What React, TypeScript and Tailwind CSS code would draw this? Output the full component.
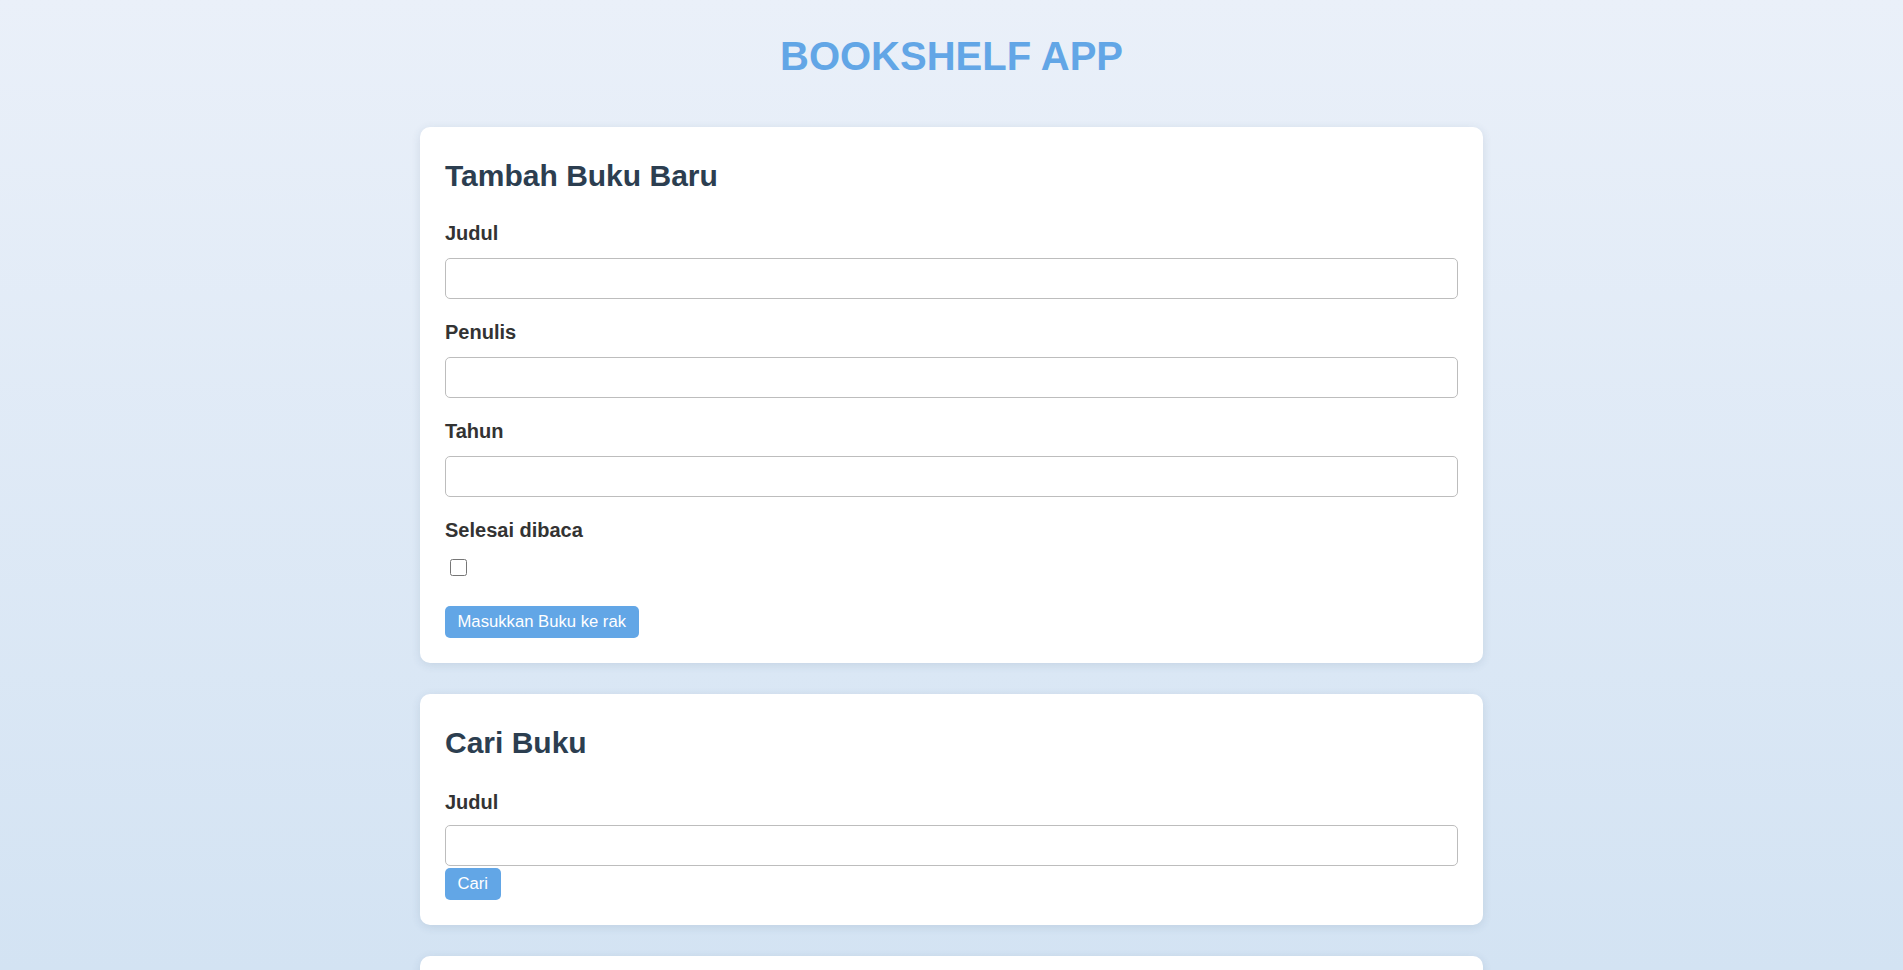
import * as React from 'react'

type Field = { id: string; label: string; type?: string }

const bookFields: Field[] = [
  { id: 'bookFormTitle', label: 'Judul' },
  { id: 'bookFormAuthor', label: 'Penulis' },
  { id: 'bookFormYear', label: 'Tahun', type: 'number' },
]

function Card({ children }: { children: React.ReactNode }) {
  return (
    <section className="bg-white rounded-[10px] p-[25px] shadow-[0_2px_10px_rgba(40,70,110,0.12)]">
      {children}
    </section>
  )
}

function Heading({ children, className = '' }: { children: React.ReactNode; className?: string }) {
  return (
    <h2 className={`mt-[6px] text-[30px] leading-[36px] font-bold text-[#2c3e50] ${className}`}>
      {children}
    </h2>
  )
}

function Label({ htmlFor, children }: { htmlFor: string; children: React.ReactNode }) {
  return (
    <label htmlFor={htmlFor} className="block text-[20px] leading-[23px] font-bold text-[#333333]">
      {children}
    </label>
  )
}

function TextInput({ id, type = 'text' }: { id: string; type?: string }) {
  return (
    <input
      id={id}
      type={type}
      className="block w-full h-[41px] px-[10px] border border-[#bdbdbd] rounded-[5px] bg-white text-[18px] outline-none"
    />
  )
}

function Button({ children }: { children: React.ReactNode }) {
  return (
    <button
      type="submit"
      className="h-[32px] px-[12.5px] rounded-[5px] bg-[#62a6e6] text-white text-[16.67px] leading-none"
    >
      {children}
    </button>
  )
}

export default function App() {
  const [done, setDone] = React.useState(false)

  return (
    <div className="min-h-screen bg-fixed bg-gradient-to-b from-[#eaf0f9] to-[#d3e3f3] font-['Liberation_Sans',Arial,sans-serif] pb-[40px]">
      <header className="pt-[33px]">
        <h1 className="text-center text-[40px] leading-[46px] font-bold text-[#62a6e6]">BOOKSHELF APP</h1>
      </header>

      <main className="w-[1063px] mx-auto mt-[48px] flex flex-col gap-[31px]">
        {/* Form tambah buku */}
        <Card>
          <Heading className="mb-[28px]">Tambah Buku Baru</Heading>
          <form onSubmit={(e) => e.preventDefault()}>
            <div className="flex flex-col gap-[22px]">
              {bookFields.map((f) => (
                <div key={f.id}>
                  <Label htmlFor={f.id}>{f.label}</Label>
                  <div className="mt-[13px]">
                    <TextInput id={f.id} type={f.type} />
                  </div>
                </div>
              ))}
              <div>
                <Label htmlFor="bookFormIsComplete">Selesai dibaca</Label>
                <div className="mt-[17px] pl-[5px] flex">
                  <input
                    id="bookFormIsComplete"
                    type="checkbox"
                    checked={done}
                    onChange={(e) => setDone(e.target.checked)}
                    className="w-[17px] h-[17px] m-0"
                  />
                </div>
              </div>
            </div>
            <div className="mt-[30px]">
              <Button>Masukkan Buku ke rak</Button>
            </div>
          </form>
        </Card>

        {/* Pencarian */}
        <Card>
          <Heading className="mb-[30px]">Cari Buku</Heading>
          <form onSubmit={(e) => e.preventDefault()}>
            <Label htmlFor="searchBookTitle">Judul</Label>
            <div className="mt-[11px]">
              <TextInput id="searchBookTitle" />
            </div>
            <div className="mt-[2px]">
              <Button>Cari</Button>
            </div>
          </form>
        </Card>

        {/* Rak buku */}
        <Card>
          <Heading className="mb-[20px]">Belum selesai dibaca</Heading>
          <div className="h-[120px]" />
        </Card>
      </main>
    </div>
  )
}
